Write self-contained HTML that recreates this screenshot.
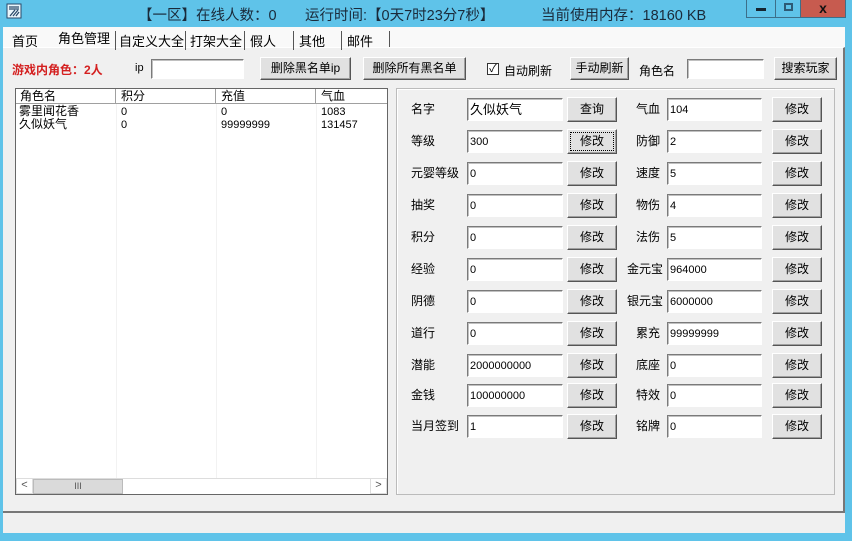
<!DOCTYPE html><html><head><meta charset="utf-8"><style>
*{margin:0;padding:0;box-sizing:border-box}
body{width:852px;height:541px;background:#5fc3e9;position:relative;overflow:hidden;font-family:"Liberation Sans","Noto Sans CJK SC","WenQuanYi Zen Hei",sans-serif;font-size:12px;color:#000}
.a{position:absolute;white-space:nowrap}
.title{font-size:14.5px;color:#1a2a3a;top:4px}
.btn{position:absolute;background:#e1e1e1;border:1px solid;border-color:#fff #555 #555 #fff;box-shadow:inset -1px -1px 0 #a0a0a0;text-align:center;font-size:12px}
.in{position:absolute;background:#fff;border:1px solid;border-color:#7a7a7a #fff #fff #7a7a7a;box-shadow:inset 1px 1px 0 #c0c0c0;font-size:11px;padding:5px 0 0 2px;line-height:12px}
.lbl{position:absolute;font-size:12px;white-space:nowrap;margin-top:-2px}
</style></head><body>
<svg class="a" style="left:6px;top:3px" width="16" height="16"><rect x="1" y="1" width="14" height="14" fill="#eaf6fc" stroke="#2a4a6a"/><path d="M3 4h10M3 6h10M4 13l5-6M7 13l5-6M10 13l3-4" stroke="#2a4a6a" stroke-width="1.3" fill="none"/></svg>
<div class="a title" style="left:138px">【一区】在线人数：0</div>
<div class="a title" style="left:305px">运行时间:【0天7时23分7秒】</div>
<div class="a title" style="left:541px">当前使用内存：18160 KB</div>
<div class="a" style="left:746px;top:0;width:30px;height:18px;border:1px solid #3c6f8a;border-top:none;"><div style="position:absolute;left:9px;top:8px;width:10px;height:3px;background:#152530"></div></div>
<div class="a" style="left:775px;top:0;width:26px;height:18px;border:1px solid #3c6f8a;border-top:none;"><div style="position:absolute;left:8px;top:3px;width:9px;height:8px;border:2px solid #2d5a75"></div></div>
<div class="a" style="left:800px;top:0;width:46px;height:18px;background:#c75b4f;border:1px solid #3c6f8a;border-top:none;color:#111;font-weight:bold;font-size:14px;text-align:center;line-height:16px">x</div>

<div class="a" style="left:3px;top:27px;width:842px;height:506px;background:#f0f0f0"></div>
<div class="a" style="left:3px;top:27px;width:842px;height:20px;background:#f9f9f9"></div>
<div class="a" style="left:3px;top:47px;width:842px;height:466px;border-top:1px solid #fff;border-bottom:2px solid #777;border-right:2px solid #777"></div>
<div class="a" style="left:12px;top:31px;font-size:13px">首页</div>
<div class="a" style="left:58px;top:28px;font-size:13px">角色管理</div>
<div class="a" style="left:115px;top:31px;font-size:13px;border-left:1px solid #555;padding-left:3px">自定义大全</div>
<div class="a" style="left:185px;top:31px;font-size:13px;border-left:1px solid #555;padding-left:4px">打架大全</div>
<div class="a" style="left:244px;top:31px;font-size:13px;border-left:1px solid #555;padding-left:5px">假人</div>
<div class="a" style="left:293px;top:31px;font-size:13px;border-left:1px solid #555;padding-left:5px">其他</div>
<div class="a" style="left:341px;top:31px;font-size:13px;border-left:1px solid #555;padding-left:5px">邮件</div>
<div class="a" style="left:389px;top:31px;height:16px;border-left:1px solid #555"></div>

<div class="lbl" style="left:12px;top:63px;color:#d42020;font-weight:bold">游戏内角色：2人</div>
<div class="lbl" style="left:135px;top:64px;font-size:11px">ip</div>
<div class="in" style="left:151px;top:59px;width:93px;height:20px"></div>
<div class="btn" style="left:260px;top:57px;width:91px;height:23px;line-height:20px">删除黑名单ip</div>
<div class="btn" style="left:363px;top:57px;width:103px;height:23px;line-height:20px">删除所有黑名单</div>
<div class="a" style="left:487px;top:63px;width:12px;height:12px;border:1px solid #333;background:#fff;font-size:11px;line-height:10px;text-align:center">✓</div>
<div class="lbl" style="left:504px;top:64px">自动刷新</div>
<div class="btn" style="left:570px;top:57px;width:59px;height:23px;line-height:20px">手动刷新</div>
<div class="lbl" style="left:639px;top:64px">角色名</div>
<div class="in" style="left:687px;top:59px;width:77px;height:20px"></div>
<div class="btn" style="left:774px;top:57px;width:63px;height:23px;line-height:20px">搜索玩家</div>

<div class="a" style="left:15px;top:88px;width:373px;height:407px;background:#fff;border:1px solid #666"></div>
<svg class="a" style="left:16px;top:104px" width="371" height="374">
<g stroke="#f2f2f2"><line x1="100.5" y1="0" x2="100.5" y2="374"/><line x1="200.5" y1="0" x2="200.5" y2="374"/><line x1="300.5" y1="0" x2="300.5" y2="374"/></g>
</svg>
<div class="a" style="left:16px;top:89px;width:371px;height:15px;background:#fff;border-bottom:1px solid #a0a0a0"></div>
<div class="a" style="left:16px;top:89px;width:100px;height:15px;border-right:1px solid #a0a0a0;padding-left:4px;line-height:15px">角色名</div>
<div class="a" style="left:116px;top:89px;width:100px;height:15px;border-right:1px solid #a0a0a0;padding-left:5px;line-height:15px">积分</div>
<div class="a" style="left:216px;top:89px;width:100px;height:15px;border-right:1px solid #a0a0a0;padding-left:5px;line-height:15px">充值</div>
<div class="a" style="left:316px;top:89px;width:71px;height:15px;padding-left:5px;line-height:15px">气血</div>
<div class="a" style="left:19px;top:105px;line-height:13px">雾里闻花香<br>久似妖气</div>
<div class="a" style="left:121px;top:106px;line-height:13px;font-size:11px">0<br>0</div>
<div class="a" style="left:221px;top:106px;line-height:13px;font-size:11px">0<br>99999999</div>
<div class="a" style="left:321px;top:106px;line-height:13px;font-size:11px">1083<br>131457</div>
<div class="a" style="left:16px;top:478px;width:371px;height:16px;background:#fff;border-top:1px solid #ddd"></div>
<div class="a" style="left:16px;top:478px;width:17px;height:16px;font-size:11px;text-align:center;color:#555;border:1px solid #ddd">&lt;</div>
<div class="a" style="left:33px;top:479px;width:90px;height:15px;background:#dadada;border:1px solid #bbb;text-align:center;font-size:9px;line-height:13px;color:#555">III</div>
<div class="a" style="left:370px;top:478px;width:17px;height:16px;font-size:11px;text-align:center;color:#555;border:1px solid #ddd">&gt;</div>

<div class="a" style="left:396px;top:88px;width:439px;height:407px;border:1px solid #bbb;box-shadow:1px 1px 0 #fff inset"></div>

<div class="lbl" style="left:411px;top:102px">名字</div><div class="in" style="left:467px;top:98px;width:96px;height:23px;font-size:13px;padding-top:3px;line-height:15px">久似妖气</div><div class="btn" style="left:567px;top:97px;width:50px;height:25px;line-height:22px">查询</div>
<div class="lbl" style="left:636px;top:102px">气血</div><div class="in" style="left:667px;top:98px;width:95px;height:23px">104</div><div class="btn" style="left:772px;top:97px;width:50px;height:25px;line-height:22px">修改</div>

<div class="lbl" style="left:411px;top:134px">等级</div><div class="in" style="left:467px;top:130px;width:96px;height:23px">300</div><div class="btn" style="left:567px;top:129px;width:50px;height:25px;line-height:22px;outline:1px dotted #000;outline-offset:-4px">修改</div>
<div class="lbl" style="left:636px;top:134px">防御</div><div class="in" style="left:667px;top:130px;width:95px;height:23px">2</div><div class="btn" style="left:772px;top:129px;width:50px;height:25px;line-height:22px">修改</div>

<div class="lbl" style="left:411px;top:166px">元婴等级</div><div class="in" style="left:467px;top:162px;width:96px;height:23px">0</div><div class="btn" style="left:567px;top:161px;width:50px;height:25px;line-height:22px">修改</div>
<div class="lbl" style="left:636px;top:166px">速度</div><div class="in" style="left:667px;top:162px;width:95px;height:23px">5</div><div class="btn" style="left:772px;top:161px;width:50px;height:25px;line-height:22px">修改</div>

<div class="lbl" style="left:411px;top:198px">抽奖</div><div class="in" style="left:467px;top:194px;width:96px;height:23px">0</div><div class="btn" style="left:567px;top:193px;width:50px;height:25px;line-height:22px">修改</div>
<div class="lbl" style="left:636px;top:198px">物伤</div><div class="in" style="left:667px;top:194px;width:95px;height:23px">4</div><div class="btn" style="left:772px;top:193px;width:50px;height:25px;line-height:22px">修改</div>

<div class="lbl" style="left:411px;top:230px">积分</div><div class="in" style="left:467px;top:226px;width:96px;height:23px">0</div><div class="btn" style="left:567px;top:225px;width:50px;height:25px;line-height:22px">修改</div>
<div class="lbl" style="left:636px;top:230px">法伤</div><div class="in" style="left:667px;top:226px;width:95px;height:23px">5</div><div class="btn" style="left:772px;top:225px;width:50px;height:25px;line-height:22px">修改</div>

<div class="lbl" style="left:411px;top:262px">经验</div><div class="in" style="left:467px;top:258px;width:96px;height:23px">0</div><div class="btn" style="left:567px;top:257px;width:50px;height:25px;line-height:22px">修改</div>
<div class="lbl" style="left:627px;top:262px">金元宝</div><div class="in" style="left:667px;top:258px;width:95px;height:23px">964000</div><div class="btn" style="left:772px;top:257px;width:50px;height:25px;line-height:22px">修改</div>

<div class="lbl" style="left:411px;top:294px">阴德</div><div class="in" style="left:467px;top:290px;width:96px;height:23px">0</div><div class="btn" style="left:567px;top:289px;width:50px;height:25px;line-height:22px">修改</div>
<div class="lbl" style="left:627px;top:294px">银元宝</div><div class="in" style="left:667px;top:290px;width:95px;height:23px">6000000</div><div class="btn" style="left:772px;top:289px;width:50px;height:25px;line-height:22px">修改</div>

<div class="lbl" style="left:411px;top:326px">道行</div><div class="in" style="left:467px;top:322px;width:96px;height:23px">0</div><div class="btn" style="left:567px;top:321px;width:50px;height:25px;line-height:22px">修改</div>
<div class="lbl" style="left:636px;top:326px">累充</div><div class="in" style="left:667px;top:322px;width:95px;height:23px">99999999</div><div class="btn" style="left:772px;top:321px;width:50px;height:25px;line-height:22px">修改</div>

<div class="lbl" style="left:411px;top:358px">潜能</div><div class="in" style="left:467px;top:354px;width:96px;height:23px">2000000000</div><div class="btn" style="left:567px;top:353px;width:50px;height:25px;line-height:22px">修改</div>
<div class="lbl" style="left:636px;top:358px">底座</div><div class="in" style="left:667px;top:354px;width:95px;height:23px">0</div><div class="btn" style="left:772px;top:353px;width:50px;height:25px;line-height:22px">修改</div>

<div class="lbl" style="left:411px;top:388px">金钱</div><div class="in" style="left:467px;top:384px;width:96px;height:23px">100000000</div><div class="btn" style="left:567px;top:383px;width:50px;height:25px;line-height:22px">修改</div>
<div class="lbl" style="left:636px;top:388px">特效</div><div class="in" style="left:667px;top:384px;width:95px;height:23px">0</div><div class="btn" style="left:772px;top:383px;width:50px;height:25px;line-height:22px">修改</div>

<div class="lbl" style="left:411px;top:419px">当月签到</div><div class="in" style="left:467px;top:415px;width:96px;height:23px">1</div><div class="btn" style="left:567px;top:414px;width:50px;height:25px;line-height:22px">修改</div>
<div class="lbl" style="left:636px;top:419px">铭牌</div><div class="in" style="left:667px;top:415px;width:95px;height:23px">0</div><div class="btn" style="left:772px;top:414px;width:50px;height:25px;line-height:22px">修改</div>
</body></html>
